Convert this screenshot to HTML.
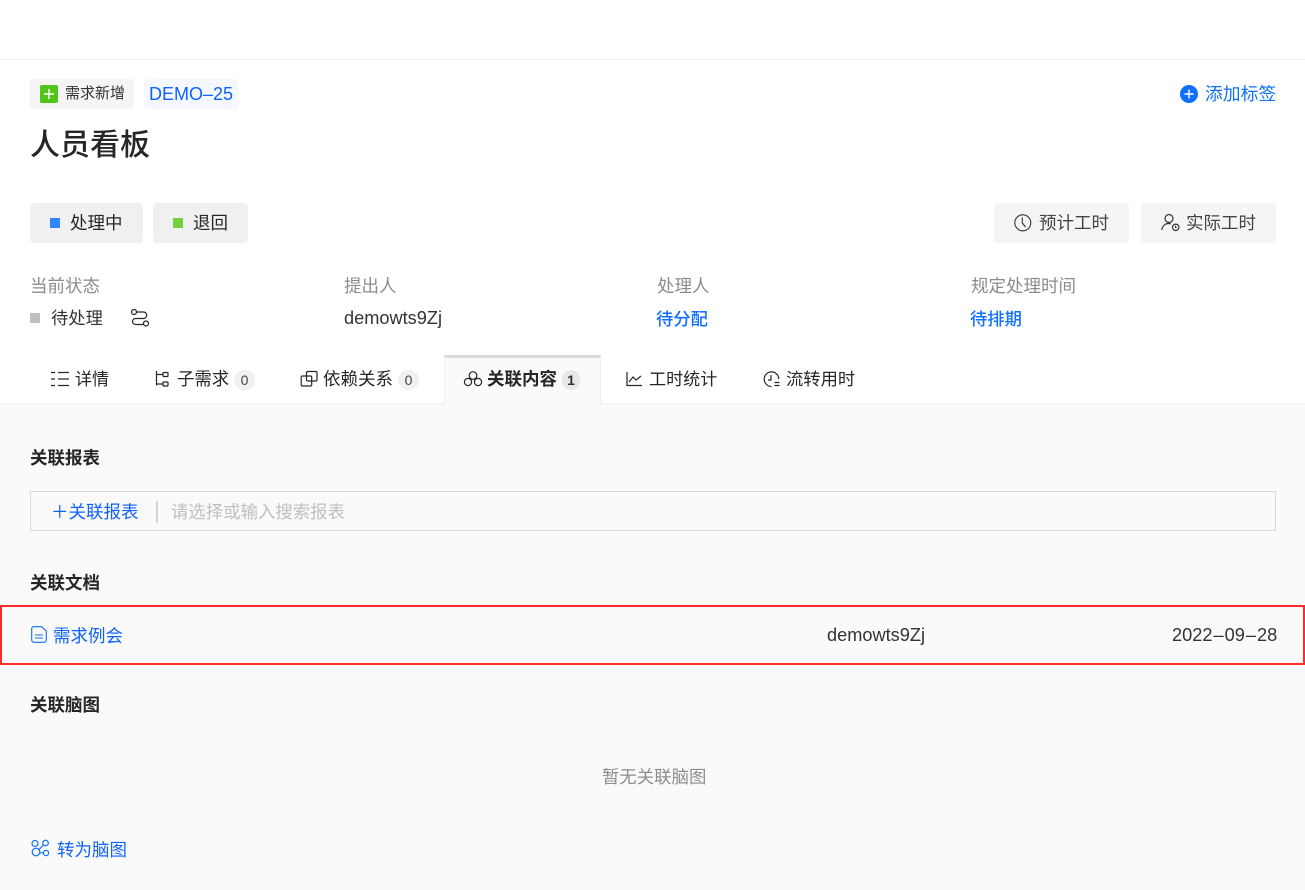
<!DOCTYPE html>
<html lang="zh">
<head>
<meta charset="utf-8">
<style>
html,body{margin:0;padding:0;width:1305px;height:890px;overflow:hidden;background:#fff}
body{position:relative;font-family:"Liberation Sans","Noto Sans CJK SC",sans-serif;color:#262626;font-size:16px}
.t{position:absolute;white-space:nowrap;line-height:24px;height:24px}
.b{position:absolute;box-sizing:border-box}
.blue{color:#0f6fff}
svg{position:absolute;fill:none;overflow:visible}
</style>
</head>
<body>
<div class="b" style="left:0;top:59px;width:1305px;height:1px;background:#f0f0f0"></div>

<div class="b" style="left:30px;top:79px;width:104px;height:30px;background:#f5f5f5;border-radius:3px"></div>
<svg style="left:40px;top:85px" width="18" height="18"><rect width="18" height="18" rx="2" fill="#52c41a"/><path d="M9 4v10M4 9h10" stroke="#fff" stroke-width="1.400"/></svg>
<div class="t" style="left:65px;top:82px;font-size:15px;color:#333">需求新增</div>
<div class="b" style="left:144px;top:79px;width:94px;height:30px;background:#f5f8ff;border-radius:3px"></div>
<div class="t" style="left:149px;top:82px;font-size:18px;color:#0f62fe">DEMO–25</div>

<svg style="left:1180px;top:85px" width="18" height="18"><circle cx="9" cy="9" r="9" fill="#0f6fff"/><path d="M9 4.500v9M4.500 9h9" stroke="#fff" stroke-width="1.400"/></svg>
<div class="t" style="left:1205px;top:82px;font-size:17.800px;color:#0f6fff">添加标签</div>

<div class="t" style="left:30px;top:126px;font-size:30px;line-height:36px;height:36px;color:#262626;font-weight:500;margin-top:2px">人员看板</div>

<div class="b" style="left:30px;top:203px;width:113px;height:40px;background:#f0f0f0;border-radius:4px"></div>
<div class="b" style="left:50px;top:218px;width:10px;height:10px;background:#2f86ff"></div>
<div class="t" style="left:70px;top:211px;font-size:17.500px">处理中</div>
<div class="b" style="left:153px;top:203px;width:95px;height:40px;background:#f0f0f0;border-radius:4px"></div>
<div class="b" style="left:173px;top:218px;width:10px;height:10px;background:#73d13d"></div>
<div class="t" style="left:193px;top:211px;font-size:17.500px">退回</div>

<div class="b" style="left:994px;top:203px;width:135px;height:40px;background:#f5f5f5;border-radius:3px"></div>
<svg style="left:1014px;top:214px" width="18" height="18"><circle cx="8.800" cy="8.800" r="8" stroke="#333" stroke-width="1.100"/><path d="M8.300 3.500v5.500l3.200 4" stroke="#333" stroke-width="1.100"/></svg>
<div class="t" style="left:1039px;top:211px;font-size:17.500px;color:#444">预计工时</div>
<div class="b" style="left:1141px;top:203px;width:135px;height:40px;background:#f5f5f5;border-radius:3px"></div>
<svg style="left:1161px;top:214px" width="18" height="18"><circle cx="8" cy="4.500" r="4" stroke="#333" stroke-width="1.200"/><path d="M.7 16C1.500 12 4 9.500 7.500 9.500c1 0 1.500.2 2.200.5" stroke="#333" stroke-width="1.200"/><circle cx="14.700" cy="13.300" r="3.200" stroke="#333" stroke-width="1.200"/><path d="M14.500 11.800v1.800h1.300" stroke="#333"/></svg>
<div class="t" style="left:1186px;top:211px;font-size:17.500px;color:#444">实际工时</div>

<div class="t" style="left:30px;top:274px;font-size:17.500px;color:#8c8c8c">当前状态</div>
<div class="t" style="left:344px;top:274px;font-size:17.500px;color:#8c8c8c">提出人</div>
<div class="t" style="left:657px;top:274px;font-size:17.500px;color:#8c8c8c">处理人</div>
<div class="t" style="left:971px;top:274px;font-size:17.500px;color:#8c8c8c">规定处理时间</div>

<div class="b" style="left:30px;top:313px;width:10px;height:10px;background:#bfbfbf"></div>
<div class="t" style="left:51px;top:306px;font-size:17.300px;color:#333">待处理</div>
<svg style="left:130px;top:308px" width="20" height="20"><circle cx="4" cy="4" r="2.500" stroke="#262626" stroke-width="1.200"/><circle cx="16" cy="15.500" r="2.500" stroke="#262626" stroke-width="1.200"/><path d="M6.500 4h7a3.250 3.250 0 0 1 0 6.500H5.500a3 3 0 0 0 0 6h8" stroke="#262626" stroke-width="1.200"/></svg>
<div class="t" style="left:344px;top:306px;font-size:18.200px;color:#333">demowts9Zj</div>
<div class="t blue" style="left:656px;top:307px;font-size:17.300px;font-weight:500">待分配</div>
<div class="t blue" style="left:970px;top:307px;font-size:17.300px;font-weight:500">待排期</div>

<div class="b" style="left:0;top:404px;width:1305px;height:486px;background:#fafafa"></div>
<div class="b" style="left:0;top:403px;width:1305px;height:1px;background:#f0f0f0"></div>

<svg style="left:51px;top:371px" width="19" height="16"><path d="M0 1.500h4M7 1.500h11M0 8h4M7 8h11M0 14.500h4M7 14.500h11" stroke="#262626" stroke-width="1.300"/></svg>
<div class="t" style="left:75px;top:368px;font-size:17px">详情</div>

<svg style="left:155px;top:370px" width="14" height="17"><path d="M1.500 1v14.500M1.500 4.500H8M1.500 14H8" stroke="#262626" stroke-width="1.200"/><rect x="8" y="2.500" width="5" height="4" rx=".8" stroke="#262626" stroke-width="1.200"/><rect x="8" y="12" width="5" height="4" rx=".8" stroke="#262626" stroke-width="1.200"/></svg>
<div class="t" style="left:177px;top:367px;font-size:17.400px">子需求</div>
<div class="b" style="left:234px;top:370px;width:21px;height:20px;border-radius:10px;background:#f0f0f0;font-size:14px;line-height:20px;text-align:center;color:#444">0</div>

<svg style="left:300px;top:370px" width="18" height="17"><rect x="6.500" y="1.500" width="10.500" height="9.500" rx="1.300" stroke="#262626" stroke-width="1.200"/><rect x="1.200" y="6" width="10.500" height="10" rx="1.300" stroke="#262626" stroke-width="1.200"/></svg>
<div class="t" style="left:323px;top:367px;font-size:17.500px">依赖关系</div>
<div class="b" style="left:398px;top:370px;width:21px;height:20px;border-radius:10px;background:#f0f0f0;font-size:14px;line-height:20px;text-align:center;color:#444">0</div>

<div class="b" style="left:444px;top:355px;width:157px;height:49px;background:#fafafa;border-top:3px solid #d9d9d9;border-left:1px solid #f0f0f0;border-right:1px solid #f0f0f0"></div>
<svg style="left:464px;top:371px" width="18" height="16"><circle cx="9" cy="4.500" r="3.800" stroke="#262626" stroke-width="1.200"/><circle cx="4" cy="11" r="3.600" stroke="#262626" stroke-width="1.200"/><circle cx="14" cy="11" r="3.600" stroke="#262626" stroke-width="1.200"/></svg>
<div class="t" style="left:487px;top:367px;font-size:17.500px;font-weight:700">关联内容</div>
<div class="b" style="left:562px;top:370px;width:18px;height:20px;border-radius:10px;background:#e8e8e8;font-size:14px;line-height:20px;text-align:center;color:#333;font-weight:700">1</div>

<svg style="left:626px;top:371px" width="16" height="15"><path d="M1 1v13.500h15" stroke="#262626" stroke-width="1.200"/><path d="M3 11l4-5 3 3 5-4" stroke="#262626" stroke-width="1.200"/></svg>
<div class="t" style="left:649px;top:368px;font-size:17.100px">工时统计</div>

<svg style="left:763px;top:371px" width="17" height="17"><path d="M8.500 15.500A7.300 7.300 0 1 1 15.800 8" stroke="#262626" stroke-width="1.200"/><path d="M8 4v5H5" stroke="#262626" stroke-width="1.200"/><path d="M11.500 11.500h5M11.500 14.500h5" stroke="#262626" stroke-width="1.200"/></svg>
<div class="t" style="left:786px;top:367px;font-size:17.300px">流转用时</div>

<div class="t" style="left:30px;top:447px;font-size:17.500px;font-weight:700;margin-top:-1px">关联报表</div>
<div class="b" style="left:30px;top:491px;width:1246px;height:40px;border:1px solid #d9d9d9"></div>
<div class="t" style="left:51px;top:500px;font-size:17.500px;color:#0f62fe">&#xFF0B;关联报表</div>
<div class="b" style="left:156px;top:501px;width:2px;height:22px;background:#d4d4d4"></div>
<div class="t" style="left:171px;top:500px;font-size:17.400px;color:#bfbfbf">请选择或输入搜索报表</div>

<div class="t" style="left:30px;top:571px;font-size:17.500px;font-weight:700">关联文档</div>
<div class="b" style="left:0;top:605px;width:1305px;height:60px;border:2px solid #ff2a2f"></div>
<svg style="left:31px;top:626px" width="16" height="17"><path d="M2.500.7H10.500L15.300 5V14a2.300 2.300 0 0 1-2.300 2.300H3A2.300 2.300 0 0 1 .7 14V2.500A1.800 1.800 0 0 1 2.500.7z" stroke="#0f6fff" stroke-width="1.100"/><path d="M4 9h8M4 12h8" stroke="#0f6fff" stroke-width="1.100"/></svg>
<div class="t" style="left:53px;top:624px;font-size:17.500px;color:#0f62fe">需求例会</div>
<div class="t" style="left:827px;top:623px;font-size:18.200px;color:#333">demowts9Zj</div>
<div class="t" style="left:1172px;top:623px;font-size:18.200px;color:#333">2022<span style="padding:0 1px">–</span>09<span style="padding:0 1px">–</span>28</div>

<div class="t" style="left:30px;top:693px;font-size:17.500px;font-weight:700">关联脑图</div>
<div class="t" style="left:602px;top:765px;font-size:17.400px;color:#8c8c8c">暂无关联脑图</div>

<svg style="left:31px;top:839px" width="19" height="19"><circle cx="4" cy="4.500" r="3" stroke="#0f6fff" stroke-width="1.200"/><circle cx="14.500" cy="4" r="2.800" stroke="#0f6fff" stroke-width="1.200"/><circle cx="5" cy="13" r="3.800" stroke="#0f6fff" stroke-width="1.200"/><circle cx="15" cy="14" r="2.600" stroke="#0f6fff" stroke-width="1.200"/><path d="M8 10.500L12.500 6M8.800 13.800h3.700" stroke="#0f6fff" stroke-width="1.200"/></svg>
<div class="t" style="left:57px;top:838px;font-size:17.500px;color:#0f62fe">转为脑图</div>
</body>
</html>
